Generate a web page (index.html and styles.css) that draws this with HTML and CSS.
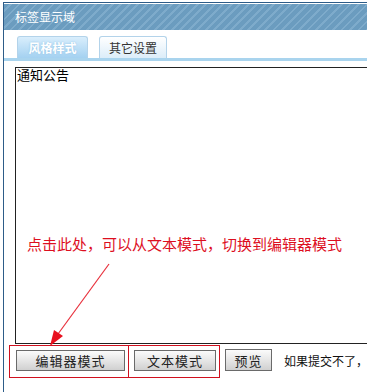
FILE: index.html
```html
<!DOCTYPE html>
<html lang="zh-CN">
<head>
  <meta charset="UTF-8">
  <title>标签显示域</title>
  <link rel="stylesheet" href="styles.css">
</head>
<body>
  <div class="panel">
    <div class="head">标签显示域</div>

    <div class="tabs">
      <div class="tab active">风格样式</div>
      <div class="tab">其它设置</div>
    </div>

    <div class="content">
      <div class="editor">通知公告</div>

      <div class="actions">
        <button class="btn wide">编辑器模式</button>
        <button class="btn mid">文本模式</button>
        <button class="btn small">预览</button>
        <span class="hint">如果提交不了，</span>
      </div>
    </div>

    <!-- 标注 -->
    <p class="note">点击此处，可以从文本模式，切换到编辑器模式</p>
    <svg class="arrow" width="70" height="90" viewBox="0 0 70 90">
      <line x1="65" y1="2" x2="14" y2="72" stroke="#e8303c" stroke-width="1.2"/>
      <polygon points="6,84 10,68 19,74" fill="#e8101e"/>
    </svg>
    <div class="mark mark1"></div>
    <div class="mark mark2"></div>
  </div>
</body>
</html>
```

FILE: styles.css
```css
* {
  margin: 0;
  padding: 0;
  box-sizing: border-box;
}

body {
  overflow: hidden;
  background: #fff;
  font-family: "Noto Sans CJK SC", "DejaVu Sans", sans-serif;
  font-size: 12px;
  color: #000;
}

.panel {
  position: relative;
  width: 420px;
  height: 392px;
  margin: 2px 0 0 3px;
  border-left: 1px solid #2d5c88;
  border-top: 1px solid #2d5c88;
}

.head {
  height: 26px;
  margin-top: 1px;
  padding-left: 11px;
  line-height: 25px;
  font-size: 12px;
  color: #fff;
  background: repeating-linear-gradient(135deg, #6b9cbf 0, #6b9cbf 4px, #7eabcb 4px, #7eabcb 6px);
}

.tabs {
  display: flex;
  gap: 11px;
  padding: 6px 0 0 13px;
  border-bottom: 3px solid #a9d4ee;
}

.tab {
  width: 68px;
  height: 22px;
  line-height: 21px;
  text-align: center;
  font-size: 12px;
  color: #333;
  border: 1px solid #b3d3ea;
  border-bottom: none;
  border-radius: 3px 3px 0 0;
  background: linear-gradient(#ffffff, #dcedf9);
}

.tab.active {
  width: 71px;
  font-weight: bold;
  color: #fff;
  text-shadow: 0 0 2px #8cc0e4;
  background: linear-gradient(#d9eefc, #a4d1f1);
}

.content {
  padding: 6px 0 0 11px;
}

.editor {
  height: 277px;
  border: 1px solid #222;
  border-right: none;
  padding-left: 1px;
  line-height: 14px;
  font-size: 13px;
}

.actions {
  display: flex;
  align-items: center;
  gap: 9px;
  padding: 5px 0 0 1px;
}

.btn {
  height: 21px;
  font-family: inherit;
  font-size: 13px;
  letter-spacing: 1px;
  color: #222;
  border: 1px solid #6a6a6a;
  background: linear-gradient(#fbfbfb, #e6e6e6 50%, #d0d0d0);
}

.btn.wide { width: 109px; }
.btn.mid { width: 82px; }
.btn.small { width: 47px; height: 22px; }

.hint {
  margin-left: 3px;
  font-size: 12px;
  color: #111;
}

.note {
  position: absolute;
  left: 23px;
  top: 230px;
  font-size: 15px;
  color: #dd0f1f;
}

.arrow {
  position: absolute;
  left: 40px;
  top: 259px;
}

.mark {
  position: absolute;
  top: 342px;
  height: 33px;
  border: 1px solid #d0101e;
}

.mark1 { left: 5px; width: 120px; }
.mark2 { left: 124px; width: 92px; }
```
